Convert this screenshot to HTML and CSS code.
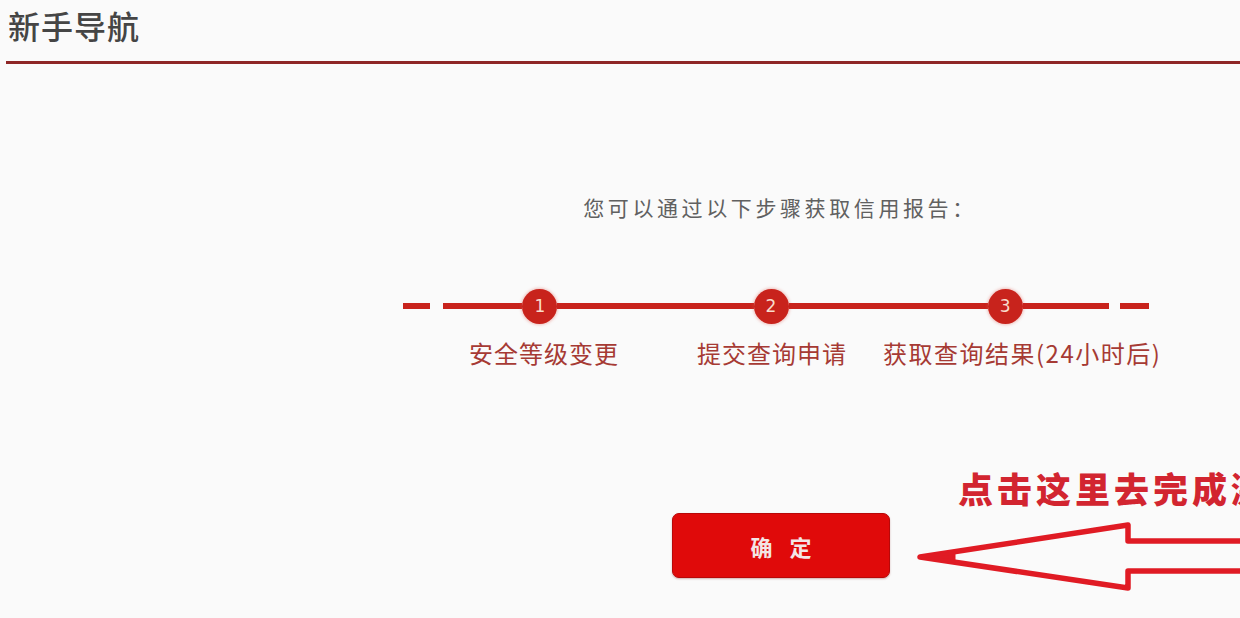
FILE: index.html
```html
<!DOCTYPE html>
<html lang="zh-CN">
<head>
<meta charset="utf-8">
<title>新手导航</title>
<link rel="stylesheet" href="styles.css">
</head>
<body>
<div class="page">
  <header class="header">
    <h1 class="title">新手导航</h1>
  </header>
  <main class="main">
    <p class="intro">您可以通过以下步骤获取信用报告：</p>
    <div class="steps">
      <div class="bar">
        <span class="dash dash-left"></span>
        <span class="seg seg-a"></span>
        <span class="dot">1</span>
        <span class="seg seg-b"></span>
        <span class="dot">2</span>
        <span class="seg seg-c"></span>
        <span class="dot">3</span>
        <span class="seg seg-d"></span>
        <span class="dash dash-right"></span>
      </div>
      <div class="labels">
        <span class="label label-1">安全等级变更</span>
        <span class="label label-2">提交查询申请</span>
        <span class="label label-3">获取查询结果(24小时后)</span>
      </div>
    </div>
    <button class="ok" type="button">确&nbsp;定</button>
  </main>
  <div class="callout">点击这里去完成激活</div>
  <svg class="arrow" width="330" height="80" viewBox="0 0 330 80" xmlns="http://www.w3.org/2000/svg">
    <path d="M10 35 L218 3 L218 19 L340 19 L340 49 L218 49 L218 66 Z" fill="none" stroke="#e01b24" stroke-width="5.5" stroke-linejoin="round"/>
    <path d="M10 35 L44 31 L44 39 Z" fill="#e01b24" stroke="#e01b24" stroke-width="3" stroke-linejoin="round"/>
  </svg>
</div>
</body>
</html>
```

FILE: styles.css
```css
html, body {
  margin: 0;
  padding: 0;
  background: #fafafa;
}
.page {
  position: relative;
  width: 1240px;
  height: 618px;
  overflow: hidden;
  font-family: "Noto Sans CJK SC", "Liberation Sans", sans-serif;
}
.header {
  margin-left: 6px;
  height: 61px;
  border-bottom: 3px solid #8e2626;
}
.title {
  margin: 0;
  padding: 5px 0 0 2px;
  font-size: 32px;
  line-height: 40px;
  font-weight: 500;
  letter-spacing: 1px;
  color: #454545;
}
.main {
  margin-left: 312px;
  width: 928px;
  display: flex;
  flex-direction: column;
  align-items: center;
}
.intro {
  margin: 130px 0 0 8px;
  font-size: 21px;
  line-height: 26px;
  letter-spacing: 3.6px;
  color: #606060;
}
.steps {
  margin-top: 68px;
  width: 746px;
  display: flex;
  flex-direction: column;
}
.bar {
  display: flex;
  align-items: center;
  height: 36px;
}
.dash, .seg {
  display: block;
  height: 6px;
  background: #c8231c;
}
.dash-left { width: 27px; margin-right: 13px; }
.dash-right { width: 29px; margin-left: 11px; }
.seg-a { width: 80px; }
.seg-b { width: 197px; }
.seg-c { width: 200px; }
.seg-d { width: 87px; }
.dot {
  width: 35px;
  height: 35px;
  border-radius: 50%;
  background: #c8231c;
  box-shadow: 0 0 3px 1px rgba(220, 80, 70, 0.35);
  color: #f8dccc;
  font-family: "DejaVu Sans", sans-serif;
  font-size: 17px;
  line-height: 35px;
  text-align: center;
  flex: none;
}
.labels {
  display: flex;
  margin-top: 14px;
}
.label {
  font-size: 24px;
  line-height: 30px;
  letter-spacing: 1px;
  color: #a63a34;
  white-space: nowrap;
}
.label-1 { margin-left: 66px; }
.label-2 { margin-left: 78px; }
.label-3 { margin-left: 36px; letter-spacing: 1.5px; }
.ok {
  margin: 145px 0 0 10px;
  width: 218px;
  height: 65px;
  border: 1px solid #b80808;
  border-radius: 7px;
  background: #e00a0a;
  color: #f3e6e6;
  font-family: "Noto Sans CJK SC", sans-serif;
  font-size: 22px;
  font-weight: 700;
  letter-spacing: 6px;
  padding: 0 0 0 6px;
  box-shadow: 0 1px 2px rgba(120, 0, 0, 0.3);
}
.callout {
  position: absolute;
  left: 958px;
  top: 465px;
  font-size: 35px;
  line-height: 46px;
  font-weight: 900;
  letter-spacing: 4px;
  color: #d22530;
  white-space: nowrap;
}
.arrow {
  position: absolute;
  left: 910px;
  top: 522px;
}
```
